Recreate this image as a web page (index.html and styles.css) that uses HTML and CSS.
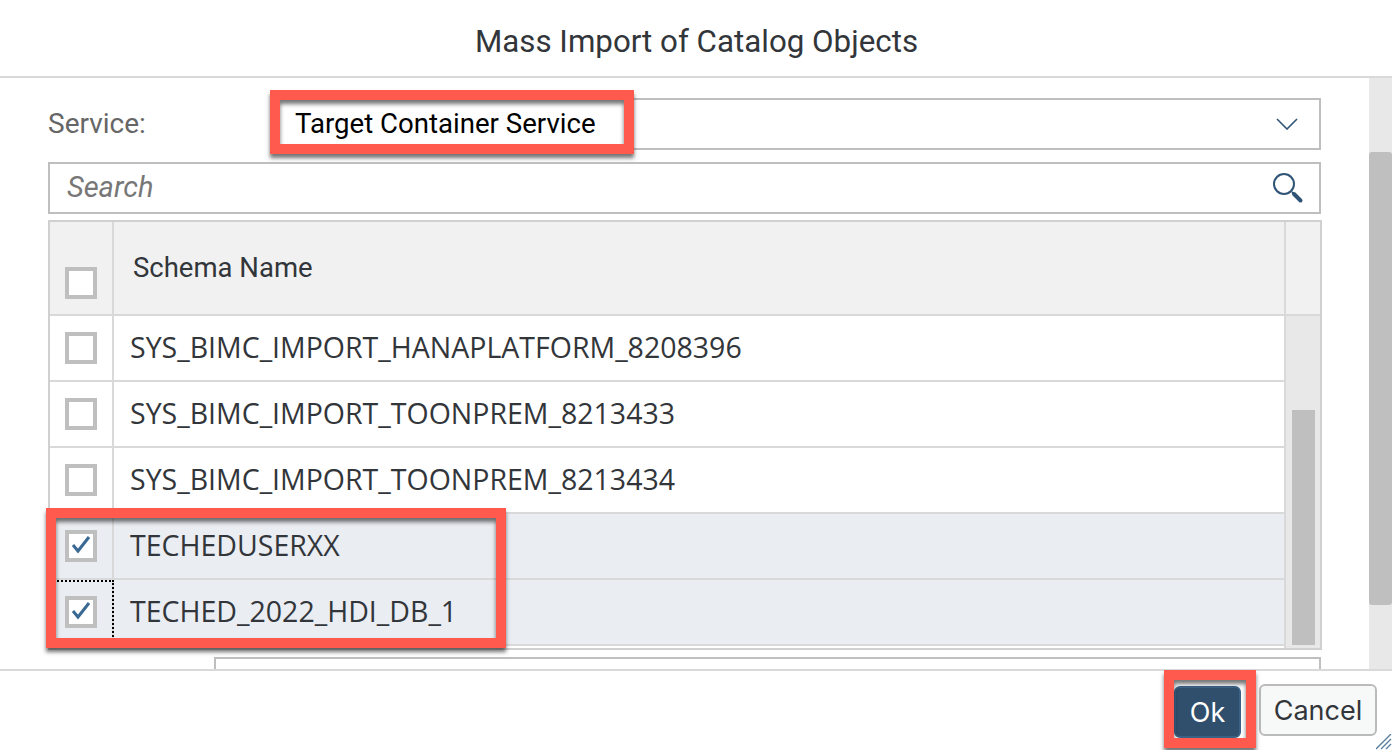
FILE: index.html
```html
<!DOCTYPE html>
<html lang="en">
<head>
<meta charset="utf-8">
<title>Mass Import of Catalog Objects</title>
<link rel="stylesheet" href="styles.css">
</head>
<body>
<div class="dialog">
  <header class="head">Mass Import of Catalog Objects</header>
  <div class="middle">
    <main class="content">
      <div class="service">
        <span class="label">Service:</span>
        <div class="field select"><span class="value">Target Container Service</span>
          <svg class="chev" width="22" height="12" viewBox="0 0 22 12"><path d="M1 1l10 10L21 1" fill="none" stroke="#2f5475" stroke-width="1.6"/></svg>
        </div>
      </div>
      <div class="field search"><span class="ph">Search</span>
        <svg class="mag" width="32" height="32" viewBox="0 0 32 32"><circle cx="12" cy="12" r="10" fill="none" stroke="#2f5475" stroke-width="2"/><path d="M20 20l2 2" stroke="#2f5475" stroke-width="2"/><path d="M22 22l6.500 6.500" stroke="#2f5475" stroke-width="4" stroke-linecap="round"/></svg>
      </div>
      <section class="table">
        <div class="thead">
          <div class="cb-cell head-cb"><span class="cb"></span></div>
          <div class="th">Schema Name</div>
          <div class="th-end"></div>
        </div>
        <div class="tbody">
          <div class="rows">
            <div class="row"><div class="cb-cell"><span class="cb"></span></div><div class="td">SYS_BIMC_IMPORT_HANAPLATFORM_8208396</div></div>
            <div class="row"><div class="cb-cell"><span class="cb"></span></div><div class="td">SYS_BIMC_IMPORT_TOONPREM_8213433</div></div>
            <div class="row"><div class="cb-cell"><span class="cb"></span></div><div class="td">SYS_BIMC_IMPORT_TOONPREM_8213434</div></div>
            <div class="row sel"><div class="cb-cell"><span class="cb"><svg width="24" height="24" viewBox="0 0 24 24"><path d="M4 11l5 6L20 3" fill="none" stroke="#3a6a94" stroke-width="3"/></svg></span></div><div class="td">TECHEDUSERXX</div></div>
            <div class="row sel"><div class="cb-cell focus"><span class="cb"><svg width="24" height="24" viewBox="0 0 24 24"><path d="M4 11l5 6L20 3" fill="none" stroke="#3a6a94" stroke-width="3"/></svg></span></div><div class="td">TECHED_2022_HDI_DB_1</div></div>
          </div>
          <div class="vbar"><div class="vthumb"></div></div>
        </div>
      </section>
      <div class="field lower"></div>
    </main>
    <div class="scrollbar"><div class="thumb"></div></div>
  </div>
  <footer class="foot">
    <button class="btn ok">Ok</button>
    <button class="btn cancel">Cancel</button>
  </footer>
</div>
<div class="mark mark-service"></div>
<div class="mark mark-rows"></div>
<div class="mark mark-ok"></div>
<svg class="grip" width="16" height="16" viewBox="0 0 16 16"><path d="M0 15L15 0M5 15L15 5M10 15l5-5" stroke="#5b7f9f" stroke-width="1.400" fill="none"/></svg>
</body>
</html>
```
FILE: styles.css
```css
* { box-sizing: border-box; }
html, body { margin: 0; padding: 0; }
body {
  position: relative;
  width: 1392px;
  height: 750px;
  overflow: hidden;
  background: #fff;
  font-family: Roboto, "Liberation Sans", sans-serif;
  color: #32363a;
}
.dialog { display: flex; flex-direction: column; height: 750px; }
.head {
  height: 78px;
  flex: none;
  border-bottom: 2px solid #d9d9d9;
  display: flex;
  align-items: center;
  justify-content: center;
  font-size: 31.3px;
  padding-top: 6px;
  padding-left: 1px;
}
.middle { flex: none; height: 591px; display: flex; overflow: hidden; }
.content { width: 1369px; flex: none; padding: 20px 48px 0 48px; }
.service { display: flex; align-items: center; height: 52px; }
.label { width: 230px; flex: none; font-size: 28px; color: #666; padding-bottom: 2px; }
.field { border: 2px solid #bfbfbf; background: #fff; display: flex; align-items: center; }
.select { flex: 1; height: 52px; padding-left: 15px; padding-right: 21px; justify-content: space-between; }
.value { font-size: 27.6px; color: #000; padding-bottom: 2px; }
.search { height: 52px; margin-top: 12px; padding-left: 17px; padding-right: 16px; justify-content: space-between; }
.ph { font-size: 29px; font-style: italic; color: #777; padding-bottom: 2px; }
.mag { margin-right: -1px; }
.table {
  margin-top: 6px;
  width: 1274px;
  height: 430px;
  border: 2px solid #d0d0d0;
}
.thead { display: flex; height: 94px; background: #f1f1f1; border-bottom: 2px solid #d9d9d9; }
.cb-cell {
  width: 64px;
  flex: none;
  display: flex;
  align-items: center;
  justify-content: center;
  border-right: 2px solid #d9d9d9;
}
.head-cb { align-items: flex-start; padding-top: 45px; }
.cb {
  width: 32px;
  height: 32px;
  border: 4px solid #bfbfbf;
  background: #fff;
  display: block;
}
.cb svg { display: block; }
.th { flex: 1; font-size: 27.500px; padding: 29px 0 0 19px; }
.th-end { width: 36px; flex: none; border-left: 2px solid #d9d9d9; }
.tbody { display: flex; height: 332px; }
.rows { flex: 1; }
.row { display: flex; height: 66px; border-bottom: 2px solid #d9d9d9; }
.sel { background: #eaedf2; }
.focus { outline: 2px dotted #000; outline-offset: -2px; }
.td { flex: 1; display: flex; align-items: center; padding: 0 0 2px 16px; font-family: "Open Sans", "Liberation Sans", sans-serif; font-size: 28.500px; }
.vbar { width: 36px; flex: none; background: #e8e8e8; padding: 94px 5px 3px 6px; border-left: 2px solid #d9d9d9; }
.vthumb { height: 235px; background: #bfbfbf; }
.lower { margin-top: 7px; margin-left: 166px; height: 40px; width: 1107px; }
.scrollbar { width: 23px; flex: none; background: #e8e8e8; padding-top: 74px; }
.thumb { height: 453px; background: #bfbfbf; border-radius: 3px; }
.foot {
  flex: 1;
  background: #fff;
  border-top: 2px solid #d9d9d9;
  display: flex;
  justify-content: flex-end;
  align-items: flex-start;
  gap: 18px;
  padding: 13px 15px 0 0;
}
.btn {
  font-family: Inter, "Liberation Sans", sans-serif;
  font-size: 27px;
  height: 52px;
  border-radius: 6px;
  padding: 0;
}
.ok { width: 67px; margin-top: 2px; background: #2f4f6c; border: 2px solid #3a6186; color: #fff; }
.cancel { width: 118px; background: #f7f8f8; border: 2px solid #bbb; color: #32363a; }
.mark {
  position: absolute;
  border: 10px solid #ff5a4d;
  box-shadow: 0 4px 4px rgba(0,0,0,.55), inset 0 4px 4px rgba(0,0,0,.55);
}
.mark-service { left: 270px; top: 90px; width: 364px; height: 64px; }
.mark-rows { left: 46px; top: 508px; width: 460px; height: 140px; }
.mark-ok { left: 1164px; top: 670px; width: 92px; height: 78px; }
.grip { position: absolute; right: 0; bottom: 0; }
```
